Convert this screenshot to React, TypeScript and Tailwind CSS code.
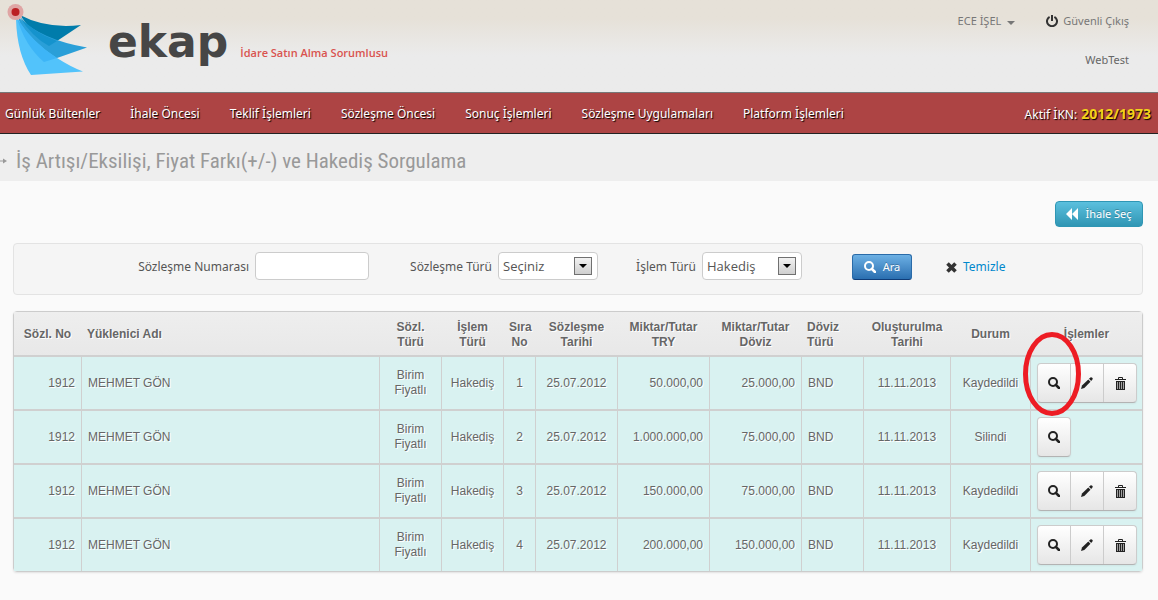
import type { ReactNode } from "react";

const shadow: Record<string, string> = {
  light: "[text-shadow:1px_1px_0_#ffffff]",
  dark: "[text-shadow:1px_1px_1px_#000000]",
};

const menu = [
  "Günlük Bültenler",
  "İhale Öncesi",
  "Teklif İşlemleri",
  "Sözleşme Öncesi",
  "Sonuç İşlemleri",
  "Sözleşme Uygulamaları",
  "Platform İşlemleri",
];

type Column = { title: string; width: string; align: string; head: string };

const columns: Column[] = [
  { title: "Sözl. No", width: "w-[68px]", align: "text-right", head: "text-center" },
  { title: "Yüklenici Adı", width: "", align: "text-left", head: "text-left" },
  { title: "Sözl. Türü", width: "w-[62px]", align: "text-center", head: "text-center" },
  { title: "İşlem Türü", width: "w-[62px]", align: "text-center", head: "text-center" },
  { title: "Sıra No", width: "w-[32px]", align: "text-center", head: "text-center" },
  { title: "Sözleşme Tarihi", width: "w-[82px]", align: "text-center", head: "text-center" },
  { title: "Miktar/Tutar TRY", width: "w-[92px]", align: "text-right", head: "text-center" },
  { title: "Miktar/Tutar Döviz", width: "w-[92px]", align: "text-right", head: "text-center" },
  { title: "Döviz Türü", width: "w-[62px]", align: "text-left", head: "text-left" },
  { title: "Oluşturulma Tarihi", width: "w-[87px]", align: "text-center", head: "text-center" },
  { title: "Durum", width: "w-[80px]", align: "text-center", head: "text-center" },
];

const rows = [
  ["1912", "MEHMET GÖN", "Birim Fiyatlı", "Hakediş", "1", "25.07.2012", "50.000,00", "25.000,00", "BND", "11.11.2013", "Kaydedildi"],
  ["1912", "MEHMET GÖN", "Birim Fiyatlı", "Hakediş", "2", "25.07.2012", "1.000.000,00", "75.000,00", "BND", "11.11.2013", "Silindi"],
  ["1912", "MEHMET GÖN", "Birim Fiyatlı", "Hakediş", "3", "25.07.2012", "150.000,00", "75.000,00", "BND", "11.11.2013", "Kaydedildi"],
  ["1912", "MEHMET GÖN", "Birim Fiyatlı", "Hakediş", "4", "25.07.2012", "200.000,00", "150.000,00", "BND", "11.11.2013", "Kaydedildi"],
];

const SearchIcon = () => (
  <svg width="12" height="12" viewBox="0 0 12 12" fill="none" stroke="currentColor" aria-hidden="true">
    <circle cx="5" cy="5" r="4" strokeWidth="2" />
    <path d="M7.8 7.8 L11 11" strokeWidth="2.6" strokeLinecap="round" />
  </svg>
);

const PencilIcon = () => (
  <svg width="12" height="12" viewBox="0 0 12 12" fill="currentColor" aria-hidden="true">
    <path d="M0 12 L1 8.6 L7.3 2.5 L9.5 4.7 L3.3 11 Z" />
    <path d="M8 1.8 L9.4 0.5 Q10.3 -0.2 11.2 0.7 Q12.2 1.7 11.4 2.6 L10.2 4 Z" />
  </svg>
);

const TrashIcon = () => (
  <svg width="11" height="13" viewBox="0 0 11 13" aria-hidden="true">
    <path d="M3.5 2 V0.5 H7.5 V2" fill="none" stroke="currentColor" />
    <path d="M0 2 H11 V3 H0 Z" fill="currentColor" />
    <path d="M1 4 H10 V13 H1 Z" fill="currentColor" />
    <path d="M2.5 5 V12 M4.5 5 V12 M6.5 5 V12 M8.5 5 V12" stroke="#a0a0a0" />
  </svg>
);

const PowerIcon = () => (
  <svg width="12" height="12" viewBox="0 0 12 12" fill="none" stroke="#333333" strokeWidth="2" aria-hidden="true">
    <path d="M3.6 1.8 A5 5 0 1 0 8.4 1.8" />
    <path d="M6 0 V6" />
  </svg>
);

const Logo = () => (
  <svg width="90" height="78" viewBox="0 0 90 78" aria-hidden="true">
    <path d="M20 15 Q46 29 81 25 L57 41 L49 46 Q34 36 20 15 Z" fill="#007cab" />
    <path d="M18 17 Q42 40 87 47.5 L57 58 L44 62 Q26 46 18 17 Z" fill="#2a9fd8" />
    <path d="M19 16 Q34 33 57 41 L49 46 Q32 37 19 16 Z" fill="#1593cd" />
    <path d="M16 19 Q17 54 31 75 L83 71.5 Q71 67 57 58 Q30 41 17 18 Z" fill="#52c3fb" />
    <path d="M17 18 Q32 42 57 58 L44 62 Q25 46 17 18 Z" fill="#3db5f7" />
    <circle cx="15.5" cy="12" r="8" fill="#dfa5a4" />
    <circle cx="15.5" cy="12" r="4" fill="#bb2025" />
  </svg>
);

const Select = ({ id, label, width, options }: { id: string; label: string; width: string; options: string[] }) => (
  <div className="flex items-center gap-[6px]">
    <label htmlFor={id} className={`${width} pt-[2px] text-right whitespace-nowrap`}>
      {label}
    </label>
    <div className="relative">
      <select
        id={id}
        className="block h-7 w-[100px] appearance-none rounded border border-[#cccccc] bg-white px-1 pt-[2px] font-['Open_Sans',sans-serif] text-[13px] text-[#555555]"
      >
        {options.map((option) => (
          <option key={option}>{option}</option>
        ))}
      </select>
      <span className="pointer-events-none absolute top-[5px] right-[6px] flex h-[18px] w-[18px] items-center justify-center border border-[#707070] bg-linear-to-b from-[#f2f2f2] to-[#cfcfcf]">
        <svg width="8" height="4" viewBox="0 0 8 4" aria-hidden="true">
          <path d="M0 0 H8 L4 4 Z" fill="#000000" />
        </svg>
      </span>
    </div>
  </div>
);

const Action = ({ label, children }: { label: string; children: ReactNode }) => (
  <button
    type="button"
    aria-label={label}
    className="flex h-10 w-[33px] items-center justify-center border-r border-[#cccccc] text-[#222222] last:w-[32px] last:border-r-0"
  >
    {children}
  </button>
);

const Actions = ({ deleted, marked }: { deleted: boolean; marked: boolean }) => (
  <div className="relative w-fit">
    <div className="flex h-10 w-fit items-center overflow-hidden rounded border border-[#cccccc] border-b-[#b3b3b3] bg-linear-to-b from-white to-[#e6e6e6] shadow-[0_1px_2px_rgba(0,0,0,0.05)]">
      <Action label="Görüntüle">
        <SearchIcon />
      </Action>
      {!deleted && (
        <>
          <Action label="Düzenle">
            <PencilIcon />
          </Action>
          <Action label="Sil">
            <TrashIcon />
          </Action>
        </>
      )}
    </div>
    {marked && (
      <svg
        className="pointer-events-none absolute -top-[31px] -left-[14px]"
        width="58"
        height="84"
        viewBox="0 0 58 84"
        aria-hidden="true"
      >
        <ellipse cx="29" cy="42" rx="26.5" ry="39.5" fill="none" stroke="#ed1c24" strokeWidth="5" />
      </svg>
    )}
  </div>
);

const App = () => {
  return (
    <div className="min-h-screen bg-[#fafafa] font-['Noto_Sans','Open_Sans',sans-serif] text-[12px] text-[#555555]">
      <header className="flex h-[93px] justify-between border-b border-[#777777] bg-linear-to-b from-[#e6e1d8] from-20% to-[#ebebeb] to-60%">
        <div className="flex items-start">
          <Logo />
          <span className="ml-[18px] pt-[18px] font-['DejaVu_Sans',sans-serif] text-[44px] leading-[48px] font-bold text-[#464646]">
            ekap
          </span>
          <span className="ml-3 pt-[45px] font-['Open_Sans',sans-serif] text-[11px] leading-4 font-semibold text-[#d9534f]">
            İdare Satın Alma Sorumlusu
          </span>
        </div>
        <div className="flex flex-col items-end gap-[23px] pt-[13px] pr-[29px] text-[11px] leading-4 text-[#777777]">
          <div className="flex gap-[31px]">
            <button type="button" className="flex items-center gap-[6px]">
              ECE İŞEL
              <svg width="8" height="4" viewBox="0 0 8 4" className="mt-1" aria-hidden="true">
                <path d="M0 0 H8 L4 4 Z" fill="#777777" />
              </svg>
            </button>
            <a href="#" className="flex items-center gap-[5px]">
              <PowerIcon />
              Güvenli Çıkış
            </a>
          </div>
          <span className="text-[#666666]">WebTest</span>
        </div>
      </header>

      <nav className={`flex h-[41px] items-center justify-between border-b border-[#222222] bg-[#ad4444] pt-[2px] pr-[7px] pl-[5px] text-white ${shadow.dark}`}>
        <div className="flex gap-[30px]">
          {menu.map((item) => (
            <a key={item} href="#">
              {item}
            </a>
          ))}
        </div>
        <span className="flex items-baseline gap-1 leading-4">
          Aktif İKN: <b className="font-['Open_Sans',sans-serif] text-[14px] text-[#f2d21b]">2012/1973</b>
        </span>
      </nav>

      <div className="flex h-[47px] items-center gap-[9px] bg-[#eeeeee] pt-[6px] text-[#999999]">
        <svg width="7" height="6" viewBox="0 0 7 6" aria-hidden="true">
          <path d="M0 3 H5" stroke="#999999" />
          <path d="M3 0.5 L7 3 L3 5.5 Z" fill="#999999" />
        </svg>
        <h1 className="font-['Roboto_Condensed',Roboto,sans-serif] text-[21px] leading-8 whitespace-nowrap">
          İş Artışı/Eksilişi, Fiyat Farkı(+/-) ve Hakediş Sorgulama
        </h1>
      </div>

      <main className="flex flex-col gap-4 pt-5 pr-[15px] pl-[13px]">
        <button
          type="button"
          className="flex h-[26px] w-[88px] items-center justify-center gap-[7px] self-end rounded border border-[#2f96b4] bg-linear-to-b from-[#5bc0de] to-[#2f96b4] text-[11px] text-white [text-shadow:0_-1px_0_rgba(0,0,0,0.25)]"
        >
          <svg width="12" height="12" viewBox="0 0 12 12" fill="currentColor" aria-hidden="true">
            <path d="M6 0 V12 L0 6 Z M12 0 V12 L6 6 Z" />
          </svg>
          İhale Seç
        </button>

        <form className="flex h-[52px] items-start rounded border border-[#e3e3e3] bg-[#f5f5f5] pt-2 pl-[119px]">
          <div className="flex items-center gap-[6px]">
            <label htmlFor="number" className="w-[116px] pt-[2px] text-right whitespace-nowrap">
              Sözleşme Numarası
            </label>
            <input id="number" type="text" className="h-7 w-[114px] rounded border border-[#cccccc] bg-white px-1" />
          </div>
          <div className="ml-[37px] flex gap-[37px]">
            <Select id="contract" label="Sözleşme Türü" width="w-[86px]" options={["Seçiniz"]} />
            <Select id="process" label="İşlem Türü" width="w-[61px]" options={["Hakediş"]} />
          </div>
          <button
            type="button"
            className="mt-[2px] ml-[50px] flex h-[26px] w-[60px] items-center justify-center gap-[7px] rounded-[3px] border border-[#2a6ba8] border-b-[#0f3c78] bg-linear-to-b from-[#6cb0e4] to-[#2a6fb0] text-[11px] text-white [text-shadow:0_-1px_0_rgba(0,0,0,0.25)]"
          >
            <SearchIcon />
            Ara
          </button>
          <a href="#" className="mt-[6px] ml-[34px] flex items-center gap-[6px] text-[#0088cc]">
            <svg width="11" height="11" viewBox="0 0 11 11" aria-hidden="true">
              <path d="M1.5 1.5 L9.5 9.5 M9.5 1.5 L1.5 9.5" stroke="#333333" strokeWidth="3.6" />
            </svg>
            Temizle
          </a>
        </form>

        <div className="rounded border border-[#cccccc] shadow-[0_1px_2px_rgba(0,0,0,0.1)]">
          <table className={`w-full table-fixed border-separate border-spacing-0 font-['Liberation_Sans',Arial,sans-serif] text-[12px] leading-[15px] text-[#666666] ${shadow.light}`}>
            <thead>
              <tr className="h-[45px] bg-linear-to-b from-[#eeeeee] to-[#e8e8e8]">
                {columns.map((column) => (
                  <th key={column.title} className={`border-b-2 border-[#d0d0d0] pt-[2px] pr-[6px] pl-[5px] ${column.width} ${column.head}`}>
                    {column.title}
                  </th>
                ))}
                <th className="w-[111px] border-b-2 border-[#d0d0d0] pt-[2px] text-center">İşlemler</th>
              </tr>
            </thead>
            <tbody>
              {rows.map((row, index) => (
                <tr key={index} className="group h-[54px] bg-[#d9f2f1] last:h-[52px]">
                  {row.map((value, i) => (
                    <td
                      key={i}
                      className={`border-r border-b-2 border-[#d0d0d0] px-[6px] group-last:border-b-0 ${columns[i].align}`}
                    >
                      {value}
                    </td>
                  ))}
                  <td className="border-b-2 border-[#d0d0d0] pl-[6px] group-last:border-b-0">
                    <Actions deleted={row[10] === "Silindi"} marked={index === 0} />
                  </td>
                </tr>
              ))}
            </tbody>
          </table>
        </div>
      </main>
    </div>
  );
};

export default App;
